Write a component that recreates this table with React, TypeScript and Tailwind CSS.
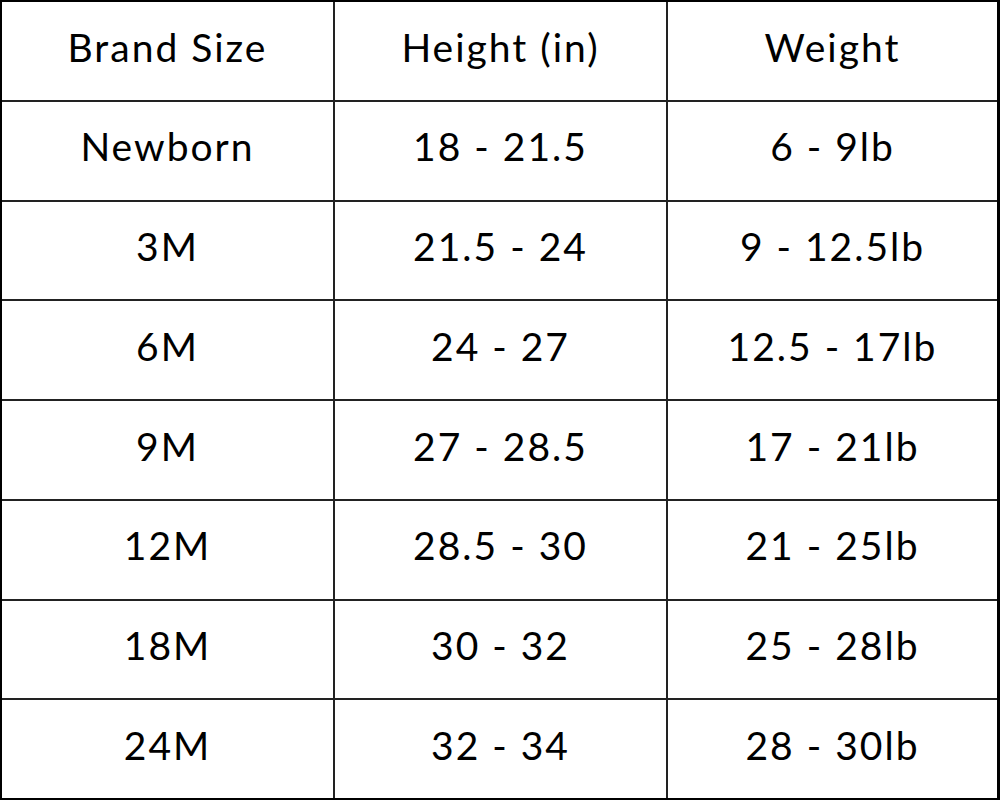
import React from "react";

const rows: [string, string, string][] = [
  ["Brand Size", "Height (in)", "Weight"],
  ["Newborn", "18 - 21.5", "6 - 9lb"],
  ["3M", "21.5 - 24", "9 - 12.5lb"],
  ["6M", "24 - 27", "12.5 - 17lb"],
  ["9M", "27 - 28.5", "17 - 21lb"],
  ["12M", "28.5 - 30", "21 - 25lb"],
  ["18M", "30 - 32", "25 - 28lb"],
  ["24M", "32 - 34", "28 - 30lb"],
];

export default function App() {
  return (
    <div
      className="w-[1000px] h-[800px] bg-white text-black border-t-2 border-l-2 border-b-2 border-r-[3px] border-black flex flex-col"
      style={{ fontFamily: "Lato, 'Liberation Sans', sans-serif" }}
    >
      {rows.map((r, i) => (
        <div
          key={i}
          className={`flex-1 flex ${i > 0 ? "border-t-2 border-[#222]" : ""}`}
        >
          <div className="w-[331px] flex items-center justify-center pb-[8px] text-[39px] tracking-[2px]">
            {r[0]}
          </div>
          <div className="w-[333px] border-l-2 border-[#222] flex items-center justify-center pb-[8px] text-[39px] tracking-[2px]">
            {r[1]}
          </div>
          <div className="flex-1 border-l-2 border-[#222] flex items-center justify-center pb-[8px] text-[39px] tracking-[2px]">
            {r[2]}
          </div>
        </div>
      ))}
    </div>
  );
}
